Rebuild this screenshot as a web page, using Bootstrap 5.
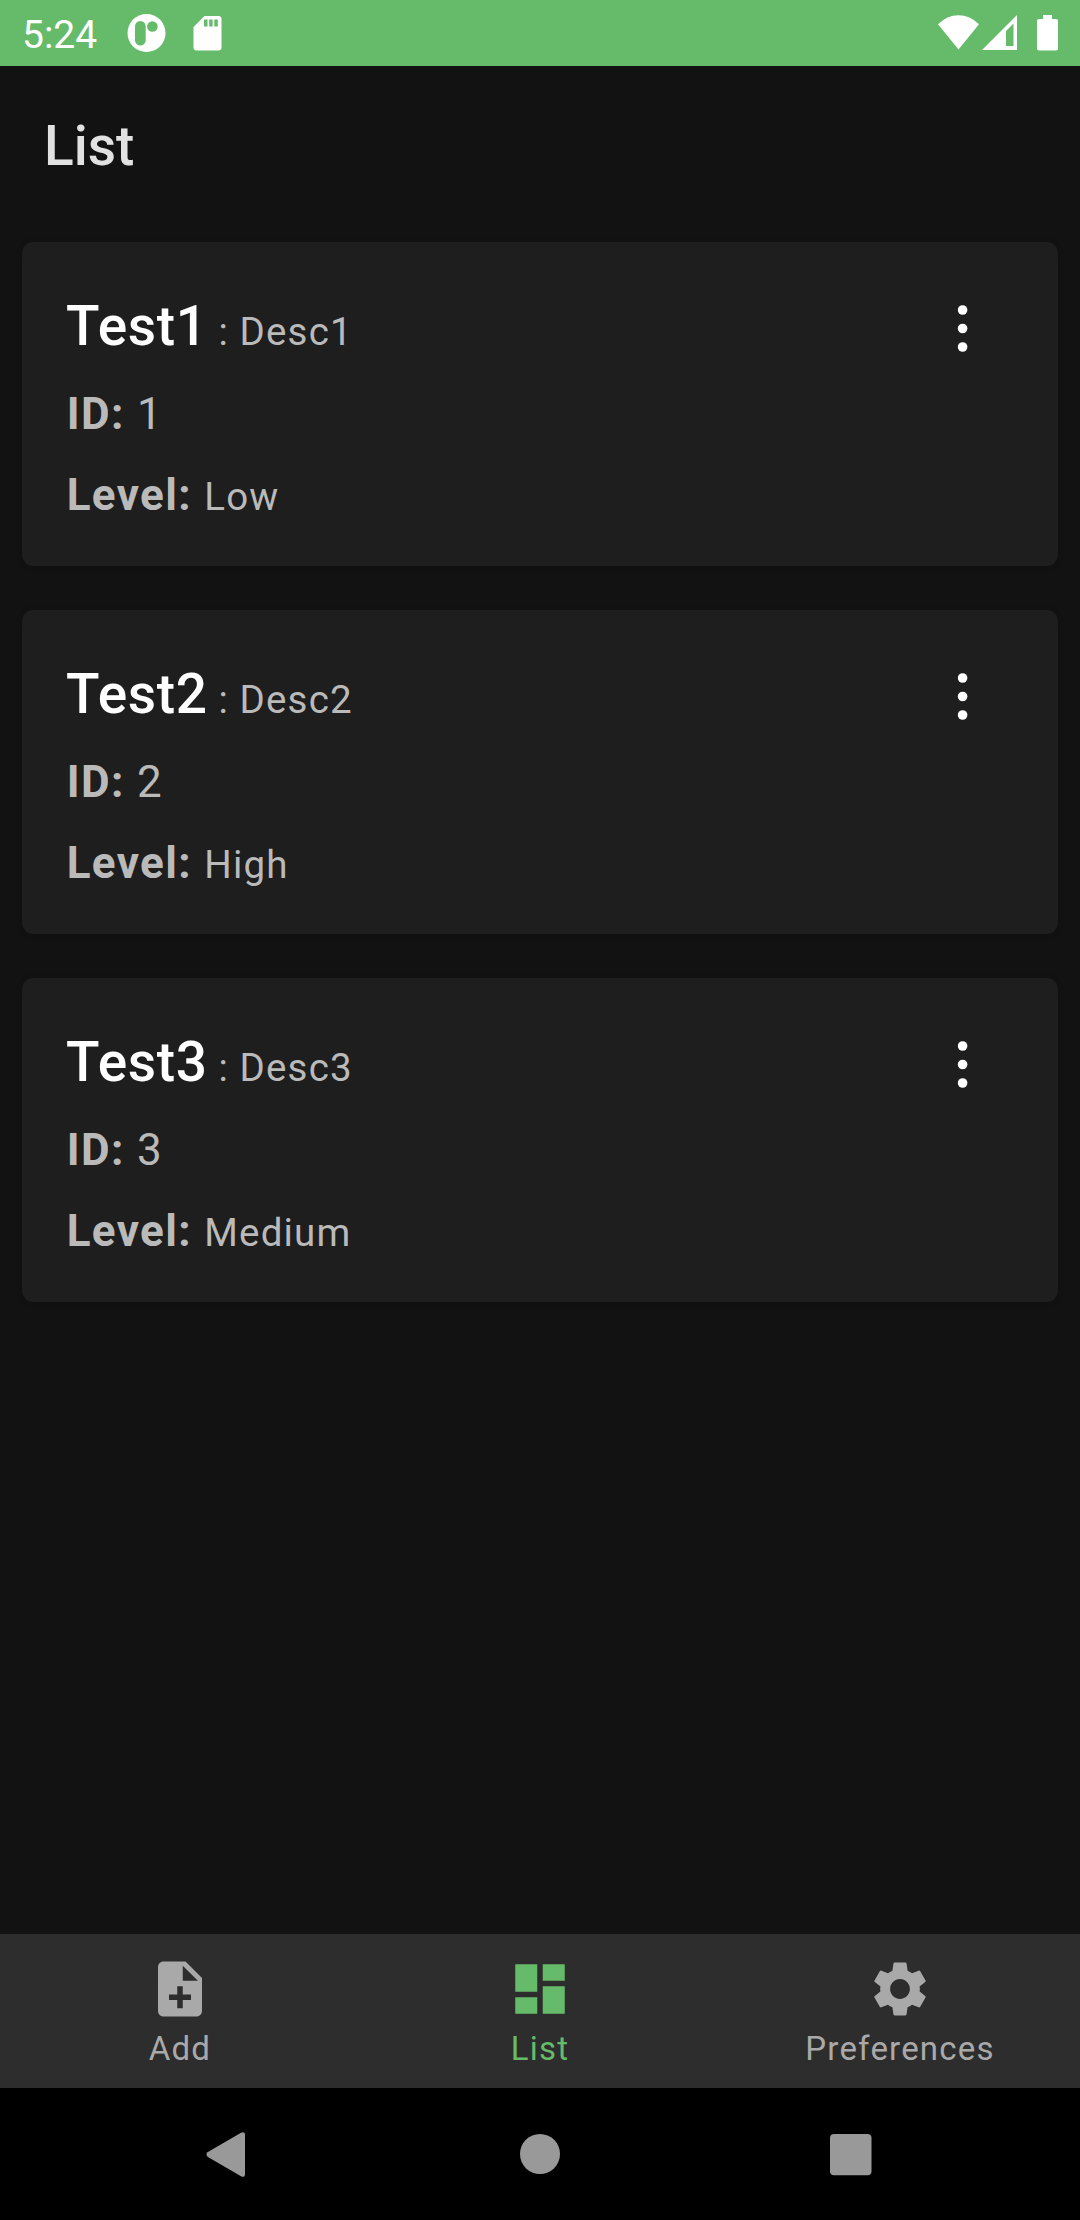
<!DOCTYPE html>
<html lang="en">
<head>
<meta charset="utf-8">
<meta name="viewport" content="width=device-width, initial-scale=1">
<title>List</title>
<link href="https://cdn.jsdelivr.net/npm/bootstrap@5.3.0/dist/css/bootstrap.min.css" rel="stylesheet">
<style>
  body { background: #121212; font-family: Roboto, "Liberation Sans", sans-serif; color: #bababa; }
  .screen { width: 1080px; height: 2220px; }
  svg { display: block; flex: none; }
  .status-bar { height: 66px; background: #66bb6a; color: #fff; padding: 0 22px; }
  .clock { font-size: 39px; line-height: 70px; width: 105px; height: 66px; }
  .app-bar { height: 154px; padding: 0 44px; }
  .app-title { font-size: 55px; line-height: 64px; font-weight: 500; color: #e1e1e1; margin-top: 48px; }
  .entries { padding: 22px; gap: 44px; }
  .entry { height: 324px; padding: 45px 88px 0 44px; background: #1e1e1e; border: 0; border-radius: 11px;
           box-shadow: 0 2px 6px rgba(0,0,0,.18); color: #bababa; --bs-card-color: #bababa; }
  .entry-head { height: 78px; }
  .entry-head > div, .entry-line { white-space: pre; }
  .entry-head > div { line-height: 78px; }
  .entry-name { font-size: 55px; font-weight: 500; color: #fff; letter-spacing: .69px; }
  .detail { font-size: 38.5px; letter-spacing: 1.15px; }
  .entry-line { font-size: 44px; line-height: 81px; height: 81px; letter-spacing: 1.375px; padding-left: .7px; }
  .entry-line:nth-child(2) { margin-top: 9px; }
  .menu-btn { width: 18px; margin-top: 16px; }
  .tab-bar { height: 154px; background: #2d2d2d; }
  .tab { color: #a9a9a9; font-size: 33px; line-height: 40px; letter-spacing: 1.2px; padding-top: 22px; text-decoration: none; }
  .tab.current { color: #66bb6a; }
  .tab span { margin-top: 7px; }
  .system-nav { height: 132px; background: #000; padding: 0 206px; }
</style>
</head>
<body>
<div class="screen d-flex flex-column overflow-hidden">
  <header class="status-bar d-flex flex-shrink-0">
    <div class="clock">5:24</div>
    <svg width="39" height="66" viewBox="127 0 39 66" fill="#fff"><circle cx="146.5" cy="33" r="19"/><rect x="135" y="21" width="10.7" height="24.5" rx="5.3" fill="#66bb6a"/><circle cx="152.4" cy="26.5" r="5.3" fill="#66bb6a"/></svg>
    <svg class="ms-4" width="34" height="66" viewBox="190 0 34 66" fill="#fff"><path d="M204.5 16h14a3 3 0 0 1 3 3v28.500a3 3 0 0 1-3 3h-22a3 3 0 0 1-3-3V27z"/><path fill="#66bb6a" d="M204 19.500h3.500v7H204zM209.200 19.500h3.400v7h-3.400zM214.300 19.500h3.500v7h-3.500z"/></svg>
    <svg class="ms-auto" width="121" height="66" viewBox="937 0 121 66" fill="#fff"><path d="M958.500 49.500L938 24.300Q947 15.300 958.500 15.300T979 24.300z"/><path fill-rule="evenodd" d="M982 50L1017 15V50zM1006 31V46H1013.500V23.500z"/><path d="M1043 15h9v4h4a2 2 0 0 1 2 2v27.500a2 2 0 0 1-2 2h-17a2 2 0 0 1-2-2V21a2 2 0 0 1 2-2h4z"/></svg>
  </header>

  <div class="app-bar flex-shrink-0 d-flex"><h1 class="app-title">List</h1></div>

  <main class="entries d-flex flex-column flex-grow-1">
    <article class="card entry">
      <div class="entry-head d-flex justify-content-between"><div><span class="entry-name">Test1</span><span class="detail"> : Desc1</span></div>
        <svg class="menu-btn" height="50" viewBox="0 0 18 50" fill="#fff"><circle cx="10.600" cy="7" r="4.800"/><circle cx="10.600" cy="25.500" r="4.800"/><circle cx="10.600" cy="44" r="4.800"/></svg></div>
      <div class="entry-line"><b>ID:</b> 1</div>
      <div class="entry-line"><b>Level:</b> <span class="detail">Low</span></div>
    </article>
    <article class="card entry">
      <div class="entry-head d-flex justify-content-between"><div><span class="entry-name">Test2</span><span class="detail"> : Desc2</span></div>
        <svg class="menu-btn" height="50" viewBox="0 0 18 50" fill="#fff"><circle cx="10.600" cy="7" r="4.800"/><circle cx="10.600" cy="25.500" r="4.800"/><circle cx="10.600" cy="44" r="4.800"/></svg></div>
      <div class="entry-line"><b>ID:</b> 2</div>
      <div class="entry-line"><b>Level:</b> <span class="detail">High</span></div>
    </article>
    <article class="card entry">
      <div class="entry-head d-flex justify-content-between"><div><span class="entry-name">Test3</span><span class="detail"> : Desc3</span></div>
        <svg class="menu-btn" height="50" viewBox="0 0 18 50" fill="#fff"><circle cx="10.600" cy="7" r="4.800"/><circle cx="10.600" cy="25.500" r="4.800"/><circle cx="10.600" cy="44" r="4.800"/></svg></div>
      <div class="entry-line"><b>ID:</b> 3</div>
      <div class="entry-line"><b>Level:</b> <span class="detail">Medium</span></div>
    </article>
  </main>

  <nav class="tab-bar row g-0 flex-shrink-0">
    <a class="tab col-4 d-flex flex-column align-items-center" href="#">
      <svg width="66" height="66" viewBox="0 0 24 24" fill="currentColor"><path d="M14 2H6c-1.100 0-1.990.9-1.990 2L4 20c0 1.100.890 2 1.990 2H18c1.100 0 2-.9 2-2V8l-6-6zm2 14h-3v3h-2v-3H8v-2h3v-3h2v3h3v2zm-3-7V3.500L18.500 9H13z"/></svg><span>Add</span></a>
    <a class="tab current col-4 d-flex flex-column align-items-center" href="#">
      <svg width="66" height="66" viewBox="0 0 24 24" fill="currentColor"><path d="M3 13h8V3H3v10zm0 8h8v-6H3v6zm10 0h8V11h-8v10zm0-18v6h8V3h-8z"/></svg><span>List</span></a>
    <a class="tab col-4 d-flex flex-column align-items-center" href="#">
      <svg width="66" height="66" viewBox="0 0 24 24" fill="currentColor"><path d="M19.140 12.940c.04-.3.060-.61.060-.94 0-.32-.02-.64-.07-.94l2.030-1.580c.18-.14.230-.41.120-.61l-1.920-3.320c-.12-.22-.37-.29-.59-.22l-2.390.96c-.5-.38-1.030-.7-1.620-.94l-.36-2.540c-.04-.24-.24-.41-.48-.41h-3.840c-.24 0-.43.17-.47.41l-.36 2.540c-.59.24-1.130.57-1.620.94l-2.390-.96c-.22-.08-.47 0-.59.22L2.740 8.870c-.12.21-.08.47.12.61l2.030 1.580c-.05.3-.09.63-.09.940s.02.640.070.940l-2.030 1.580c-.18.14-.23.41-.12.610l1.920 3.320c.12.220.370.290.590.220l2.390-.96c.5.380 1.030.7 1.620.940l.36 2.540c.05.240.240.410.480.410h3.840c.24 0 .44-.17.470-.41l.36-2.540c.59-.24 1.130-.56 1.620-.94l2.390.96c.22.080.470 0 .590-.22l1.920-3.320c.12-.22.070-.47-.12-.61l-2.010-1.580zM12 15.600c-1.980 0-3.600-1.620-3.600-3.600s1.620-3.600 3.600-3.600 3.600 1.620 3.600 3.600-1.620 3.600-3.600 3.600z"/></svg><span>Preferences</span></a>
  </nav>

  <footer class="system-nav flex-shrink-0 d-flex justify-content-between">
    <svg width="44" height="132" viewBox="206 2088 44 132" fill="#999"><path d="M207.500 2152.300L241 2132.700Q245 2131 245 2135V2174Q245 2178 241 2176.300L207.500 2156.700Q205.500 2154.500 207.500 2152.300z"/></svg>
    <svg width="44" height="132" viewBox="518 2088 44 132" fill="#999"><circle cx="540" cy="2154" r="20"/></svg>
    <svg width="44" height="132" viewBox="830 2088 44 132" fill="#999"><rect x="830" y="2134" width="41.500" height="41.300" rx="4"/></svg>
  </footer>
</div>
<script src="https://cdn.jsdelivr.net/npm/bootstrap@5.3.0/dist/js/bootstrap.bundle.min.js"></script>
</body>
</html>
